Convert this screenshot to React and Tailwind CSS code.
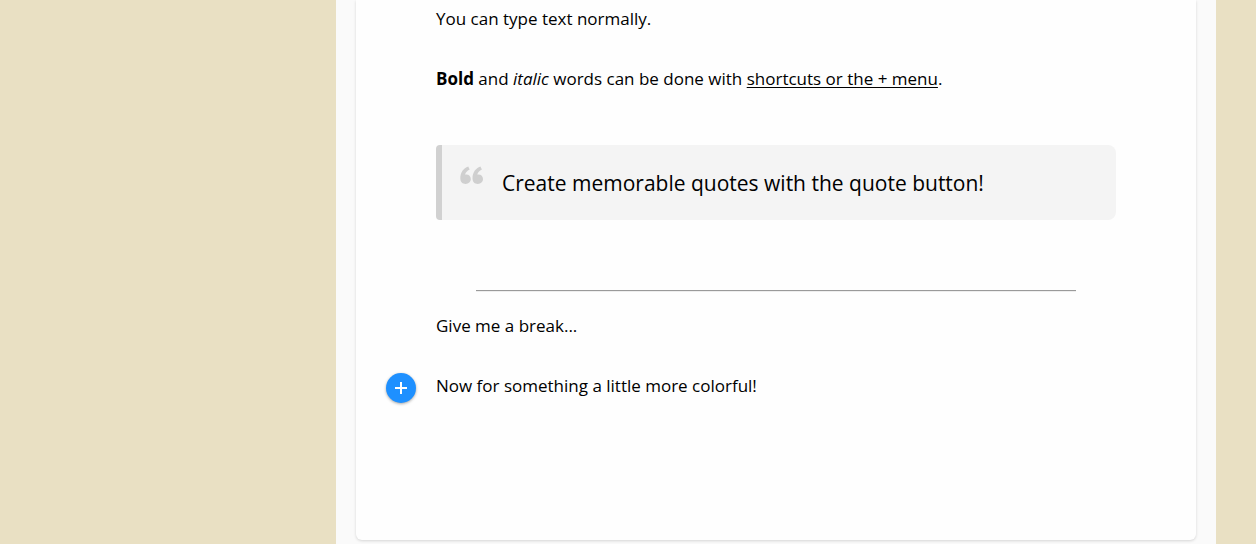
export default function App() {
  return (
    <div className="flex min-h-screen bg-[#e9e0c3] pr-10 pl-[336px] font-['Open_Sans','Noto_Sans',sans-serif] text-[17px] leading-[30px] text-black">
      <main className="min-w-0 flex-1 bg-[#fafafa] px-5 pb-1">
        <article className="rounded-b-md bg-[#fefefe] px-20 pt-1 pb-[139px] shadow-[0_1px_3px_rgba(0,0,0,0.15)]">
          <p>You can type text normally.</p>
          <p className="mt-[30px]">
            <strong className="font-bold">Bold</strong> and <em>italic</em> words can be done with{" "}
            <a href="#menu" className="underline decoration-1 underline-offset-2">shortcuts or the + menu</a>.
          </p>
          <blockquote className="mt-[51px] flex h-[75px] items-center rounded-l-sm rounded-r-lg border-l-6 border-[#d1d1d1] bg-[#f4f4f4] pl-[18px] text-[21px]">
            <svg viewBox="0 0 24 19" className="mr-[18px] mb-[14px] h-[19px] w-6 shrink-0 fill-[#cfcfcf]" aria-hidden="true">
              <path d="M8.200.5C3.500 2 .3 6.700.3 12.200c0 3.800 2.200 5.700 5.300 5.700 3 0 5.200-2 5.200-4.900 0-2.700-1.800-4.600-4.500-4.600-.4 0-.9.100-1.200.200.5-2.300 2.100-3.900 4.600-5.200z" />
              <path d="M20.400.5C15.700 2 12.500 6.700 12.500 12.200c0 3.800 2.200 5.700 5.300 5.700 3 0 5.200-2 5.200-4.900 0-2.700-1.800-4.600-4.500-4.600-.4 0-.9.100-1.200.200.5-2.300 2.100-3.900 4.600-5.200z" />
            </svg>
            <p>Create memorable quotes with the quote button!</p>
          </blockquote>
          <hr className="mx-10 mt-[70px] h-[2px] border-t border-b border-t-[#9a9a9a] border-b-[#eeeeee]" />
          <p className="mt-[19px]">Give me a break...</p>
          <div className="mt-[30px] -ml-[50px] flex gap-5">
            <button type="button" aria-label="Insert" className="mt-0.5 -mb-0.5 flex size-[30px] shrink-0 items-center justify-center rounded-full bg-[#1e90ff] text-white shadow-[0_1px_3px_rgba(0,0,0,0.35)]">
              <svg viewBox="0 0 12 12" className="size-3" fill="none" stroke="currentColor" strokeWidth="2" aria-hidden="true">
                <path d="M6 0v12M0 6h12" />
              </svg>
            </button>
            <p>Now for something a little more colorful!</p>
          </div>
        </article>
      </main>
    </div>
  );
}
